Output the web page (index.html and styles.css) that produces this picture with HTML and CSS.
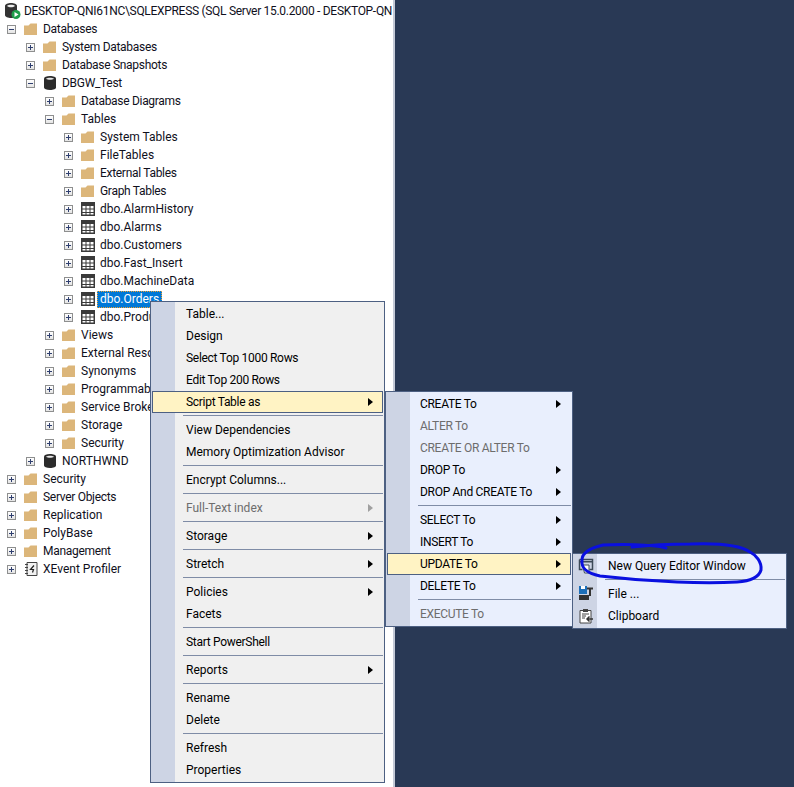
FILE: index.html
```html
<!DOCTYPE html>
<html lang="en">
<head>
<meta charset="utf-8">
<title>Object Explorer</title>
<link rel="stylesheet" href="styles.css">
</head>
<body>
<svg class="defs" width="0" height="0" aria-hidden="true">
  <symbol id="folder" viewBox="0 0 14 14"><path d="M0 3.500h4.500L6.500 1.500H13V13H0z" fill="#dcb67a"/></symbol>
  <symbol id="db" viewBox="0 0 14 14"><path d="M1 2.500C1 1 3.500 0 7 0s6 1 6 2.500v9C13 13 10.500 14 7 14s-6-1-6-2.500z" fill="#2b2b2b"/><path d="M3 2.700C4 2 5.500 1.700 7 1.700S10 2 11 2.700C10 3.400 8.500 3.700 7 3.700S4 3.400 3 2.700z" fill="#e8e8e8"/></symbol>
  <symbol id="table" viewBox="0 0 14 14"><path d="M0 0h14v14H0z" fill="#3a3a3a"/><path d="M1.500 4h3v2.500h-3zM5.500 4h3v2.500h-3zM9.500 4h3v2.500h-3zM1.500 7.500h3V10h-3zM5.500 7.500h3V10h-3zM9.500 7.500h3V10h-3zM1.500 11h3v1.500h-3zM5.500 11h3v1.500h-3zM9.500 11h3v1.500h-3z" fill="#fff"/></symbol>
</svg>

<div class="app">
  <div class="tree">
    <div class="row"><svg class="root-icon" viewBox="0 0 16 16"><path d="M0 3c0-2 3-3 6-3s6 1 6 3v9c0 2-3 3-6 3s-6-1-6-3z" fill="#333"/><path d="M2 3c1-1 2.500-1.200 4-1.200S9 2 10 3C9 4 7.500 4.200 6 4.200S3 4 2 3z" fill="#eee"/><circle cx="11" cy="11.500" r="4.500" fill="#1e9e4a"/><path d="M9.500 9l4 2.500-4 2.500z" fill="#fff"/></svg><span class="label root-label">DESKTOP-QNI61NC\SQLEXPRESS (SQL Server 15.0.2000 - DESKTOP-QN</span></div>
    <div class="row l0"><i class="exp open"></i><svg class="ico"><use href="#folder"/></svg><span class="label tight">Databases</span></div>
    <div class="row l1"><i class="exp"></i><svg class="ico"><use href="#folder"/></svg><span class="label tight">System Databases</span></div>
    <div class="row l1"><i class="exp"></i><svg class="ico"><use href="#folder"/></svg><span class="label tight">Database Snapshots</span></div>
    <div class="row l1"><i class="exp open"></i><svg class="ico"><use href="#db"/></svg><span class="label tight">DBGW_Test</span></div>
    <div class="row l2"><i class="exp"></i><svg class="ico"><use href="#folder"/></svg><span class="label tight">Database Diagrams</span></div>
    <div class="row l2"><i class="exp open"></i><svg class="ico"><use href="#folder"/></svg><span class="label">Tables</span></div>
    <div class="row l3"><i class="exp"></i><svg class="ico"><use href="#folder"/></svg><span class="label">System Tables</span></div>
    <div class="row l3"><i class="exp"></i><svg class="ico"><use href="#folder"/></svg><span class="label">FileTables</span></div>
    <div class="row l3"><i class="exp"></i><svg class="ico"><use href="#folder"/></svg><span class="label tight">External Tables</span></div>
    <div class="row l3"><i class="exp"></i><svg class="ico"><use href="#folder"/></svg><span class="label tight">Graph Tables</span></div>
    <div class="row l3"><i class="exp"></i><svg class="ico"><use href="#table"/></svg><span class="label">dbo.AlarmHistory</span></div>
    <div class="row l3"><i class="exp"></i><svg class="ico"><use href="#table"/></svg><span class="label">dbo.Alarms</span></div>
    <div class="row l3"><i class="exp"></i><svg class="ico"><use href="#table"/></svg><span class="label">dbo.Customers</span></div>
    <div class="row l3"><i class="exp"></i><svg class="ico"><use href="#table"/></svg><span class="label">dbo.Fast_Insert</span></div>
    <div class="row l3"><i class="exp"></i><svg class="ico"><use href="#table"/></svg><span class="label">dbo.MachineData</span></div>
    <div class="row l3"><i class="exp"></i><svg class="ico"><use href="#table"/></svg><span class="label selected">dbo.Orders</span></div>
    <div class="row l3"><i class="exp"></i><svg class="ico"><use href="#table"/></svg><span class="label">dbo.Products</span></div>
    <div class="row l2"><i class="exp"></i><svg class="ico"><use href="#folder"/></svg><span class="label">Views</span></div>
    <div class="row l2"><i class="exp"></i><svg class="ico"><use href="#folder"/></svg><span class="label">External Resources</span></div>
    <div class="row l2"><i class="exp"></i><svg class="ico"><use href="#folder"/></svg><span class="label">Synonyms</span></div>
    <div class="row l2"><i class="exp"></i><svg class="ico"><use href="#folder"/></svg><span class="label">Programmability</span></div>
    <div class="row l2"><i class="exp"></i><svg class="ico"><use href="#folder"/></svg><span class="label">Service Broker</span></div>
    <div class="row l2"><i class="exp"></i><svg class="ico"><use href="#folder"/></svg><span class="label">Storage</span></div>
    <div class="row l2"><i class="exp"></i><svg class="ico"><use href="#folder"/></svg><span class="label">Security</span></div>
    <div class="row l1"><i class="exp"></i><svg class="ico"><use href="#db"/></svg><span class="label">NORTHWND</span></div>
    <div class="row l0"><i class="exp"></i><svg class="ico"><use href="#folder"/></svg><span class="label">Security</span></div>
    <div class="row l0"><i class="exp"></i><svg class="ico"><use href="#folder"/></svg><span class="label tight">Server Objects</span></div>
    <div class="row l0"><i class="exp"></i><svg class="ico"><use href="#folder"/></svg><span class="label">Replication</span></div>
    <div class="row l0"><i class="exp"></i><svg class="ico"><use href="#folder"/></svg><span class="label">PolyBase</span></div>
    <div class="row l0"><i class="exp"></i><svg class="ico"><use href="#folder"/></svg><span class="label tight">Management</span></div>
    <div class="row l0"><i class="exp"></i><svg class="ico" viewBox="0 0 13 14"><path d="M2.500.500h10v13h-10z" fill="#f2f2f2" stroke="#444"/><path d="M.500 2.500h3M.500 5.500h3M.500 8.500h3M.500 11.500h3" stroke="#444"/><path d="M9.500 3.500L6 7.500h3l-1 3" fill="none" stroke="#222" stroke-width="1.200"/></svg><span class="label">XEvent Profiler</span></div>
  </div>
  <div class="splitter"></div>
  <div class="workspace"></div>
</div>

<div class="menu menu-main">
  <div class="item">Table...</div>
  <div class="item">Design</div>
  <div class="item tight">Select Top 1000 Rows</div>
  <div class="item tight">Edit Top 200 Rows</div>
  <div class="item hot more tight">Script Table as</div>
  <div class="sep"></div>
  <div class="item">View Dependencies</div>
  <div class="item">Memory Optimization Advisor</div>
  <div class="sep"></div>
  <div class="item">Encrypt Columns...</div>
  <div class="sep"></div>
  <div class="item off more">Full-Text index</div>
  <div class="sep"></div>
  <div class="item more">Storage</div>
  <div class="sep"></div>
  <div class="item more">Stretch</div>
  <div class="sep"></div>
  <div class="item more">Policies</div>
  <div class="item">Facets</div>
  <div class="sep"></div>
  <div class="item tight">Start PowerShell</div>
  <div class="sep"></div>
  <div class="item more">Reports</div>
  <div class="sep"></div>
  <div class="item">Rename</div>
  <div class="item">Delete</div>
  <div class="sep"></div>
  <div class="item">Refresh</div>
  <div class="item">Properties</div>
</div>

<div class="menu menu-sub">
  <div class="item more">CREATE To</div>
  <div class="item off">ALTER To</div>
  <div class="item off">CREATE OR ALTER To</div>
  <div class="item more">DROP To</div>
  <div class="item more">DROP And CREATE To</div>
  <div class="sep"></div>
  <div class="item more">SELECT To</div>
  <div class="item more">INSERT To</div>
  <div class="item hot more">UPDATE To</div>
  <div class="item more">DELETE To</div>
  <div class="sep"></div>
  <div class="item off">EXECUTE To</div>
</div>

<div class="menu menu-leaf">
  <div class="item"><svg class="mico" viewBox="0 0 16 16"><path d="M1.500 1.500h13v10h-3M4.500 11.500h-3v-10" fill="none" stroke="#3d4a57" stroke-width="1.500"/><path d="M1.500 3h13v1.500h-13z" fill="#3d4a57"/><path d="M4.500 7h6.500v8H6.500z" fill="#fff" stroke="#3d4a57"/></svg>New Query Editor Window</div>
  <div class="sep"></div>
  <div class="item"><svg class="mico" viewBox="0 0 16 16"><path d="M1 0h8v8H1z" fill="#1d6fb8"/><path d="M3 0h4v3H3z" fill="#fff"/><path d="M9 1.500h6v2h-2V10h-2V3.500H9z" fill="#333"/><path d="M1 9h10v5H1z" fill="#333"/></svg>File ...</div>
  <div class="item"><svg class="mico" viewBox="0 0 16 16"><path d="M2 2.500h11V15H2z" fill="#fff" stroke="#444"/><path d="M5 1h5v3H5z" fill="#444"/><path d="M4 6h7M4 8h4M4 10h3" stroke="#444"/><path d="M15 11H9m2.500-2.500L9 11l2.500 2.500" fill="none" stroke="#333" stroke-width="1.500"/></svg>Clipboard</div>
</div>

<svg class="scribble" viewBox="0 0 794 787" aria-hidden="true">
  <path d="M666 548 C650 544 620 544 603 545 C590 548 582 553 582 560 C581 568 586 573 600 576 C625 579 650 581 677 582 C700 583 720 583 737 582 C750 581 759 577 761 570 C762 562 756 555 750 552 C740 545 715 543 690 544 C675 544 650 545 632 547" fill="none" stroke="#0a10e0" stroke-width="3" stroke-linecap="round"/>
</svg>
</body>
</html>
```

FILE: styles.css
```css
* { box-sizing: border-box; }
html, body { margin: 0; height: 100%; }
body {
  width: 794px;
  height: 787px;
  overflow: hidden;
  font-family: Roboto, "Noto Sans", sans-serif;
  font-size: 12px;
  color: #000;
  position: relative;
  background: #fff;
}
.defs { position: absolute; }
.app { display: flex; height: 787px; }
.tree { width: 393px; padding-top: 2px; overflow: hidden; background: #fff; color: #10101c; }
.splitter { width: 2px; background: #c3c9d6; }
.workspace { flex: 1; background: #293955; }

.row { display: flex; align-items: center; height: 18px; white-space: nowrap; }
.row.l0 { padding-left: 7px; }
.row.l1 { padding-left: 26px; }
.row.l2 { padding-left: 45px; }
.row.l3 { padding-left: 64px; }
.root-icon { width: 16px; height: 16px; margin-left: 5px; flex: none; }
.ico { width: 14px; height: 14px; margin-left: 8px; margin-right: 2px; flex: none; }
.label { padding: 0 3px 1px; line-height: 16px; }
.root-label { padding-bottom: 0; letter-spacing: -0.3px; }
.tight { letter-spacing: -0.3px; }

.exp {
  position: relative;
  flex: none;
  display: block;
  width: 9px;
  height: 9px;
  border: 1px solid #8e8f8f;
  background: linear-gradient(#fff, #e4e4e4);
}
.exp::before {
  content: "";
  position: absolute;
  left: 1px;
  top: 3px;
  width: 5px;
  height: 1px;
  background: #2f3f6f;
}
.exp::after {
  content: "";
  position: absolute;
  left: 3px;
  top: 1px;
  width: 1px;
  height: 5px;
  background: #2f3f6f;
}
.exp.open::after { display: none; }

.selected {
  background: #0078d7;
  color: #fff;
  outline: 1px dotted #f0a030;
  outline-offset: -1px;
}

.menu {
  position: absolute;
  border: 1px solid #4d6082;
  padding: 1px;
  white-space: nowrap;
  color: #000;
}
.menu-main {
  left: 150px;
  top: 301px;
  width: 235px;
  background: linear-gradient(to right, #cdd4e4 24px, #f0f0f0 24px);
}
.menu-sub {
  left: 385px;
  top: 391px;
  width: 188px;
  letter-spacing: -0.3px;
  background: linear-gradient(to right, #cdd4e4 24px, #e9effd 24px);
}
.menu-leaf {
  left: 572px;
  top: 553px;
  width: 215px;
  background: linear-gradient(to right, #cdd4e4 24px, #e9effd 24px);
}
.item {
  position: relative;
  display: flex;
  align-items: center;
  height: 22px;
  padding-left: 34px;
}
.menu-sub .item { padding-left: 33px; }
.menu-leaf .item { padding-left: 34px; }
.item.off { color: #6d6d6d; }
.item.hot {
  background: #fff3c4;
  outline: 1px solid #4d6082;
  outline-offset: -1px;
}
.item.more::after {
  content: "";
  position: absolute;
  right: 10px;
  top: 7px;
  border-left: 5px solid #000;
  border-top: 4px solid transparent;
  border-bottom: 4px solid transparent;
}
.item.off.more::after { border-left-color: #a0a0a0; }
.sep { height: 1px; margin: 2px 0 3px 31px; background: #7f8ca6; }
.mico {
  position: absolute;
  left: 4px;
  top: 3px;
  width: 16px;
  height: 16px;
}
.scribble {
  position: absolute;
  left: 0;
  top: 0;
  width: 794px;
  height: 787px;
  pointer-events: none;
}
```
